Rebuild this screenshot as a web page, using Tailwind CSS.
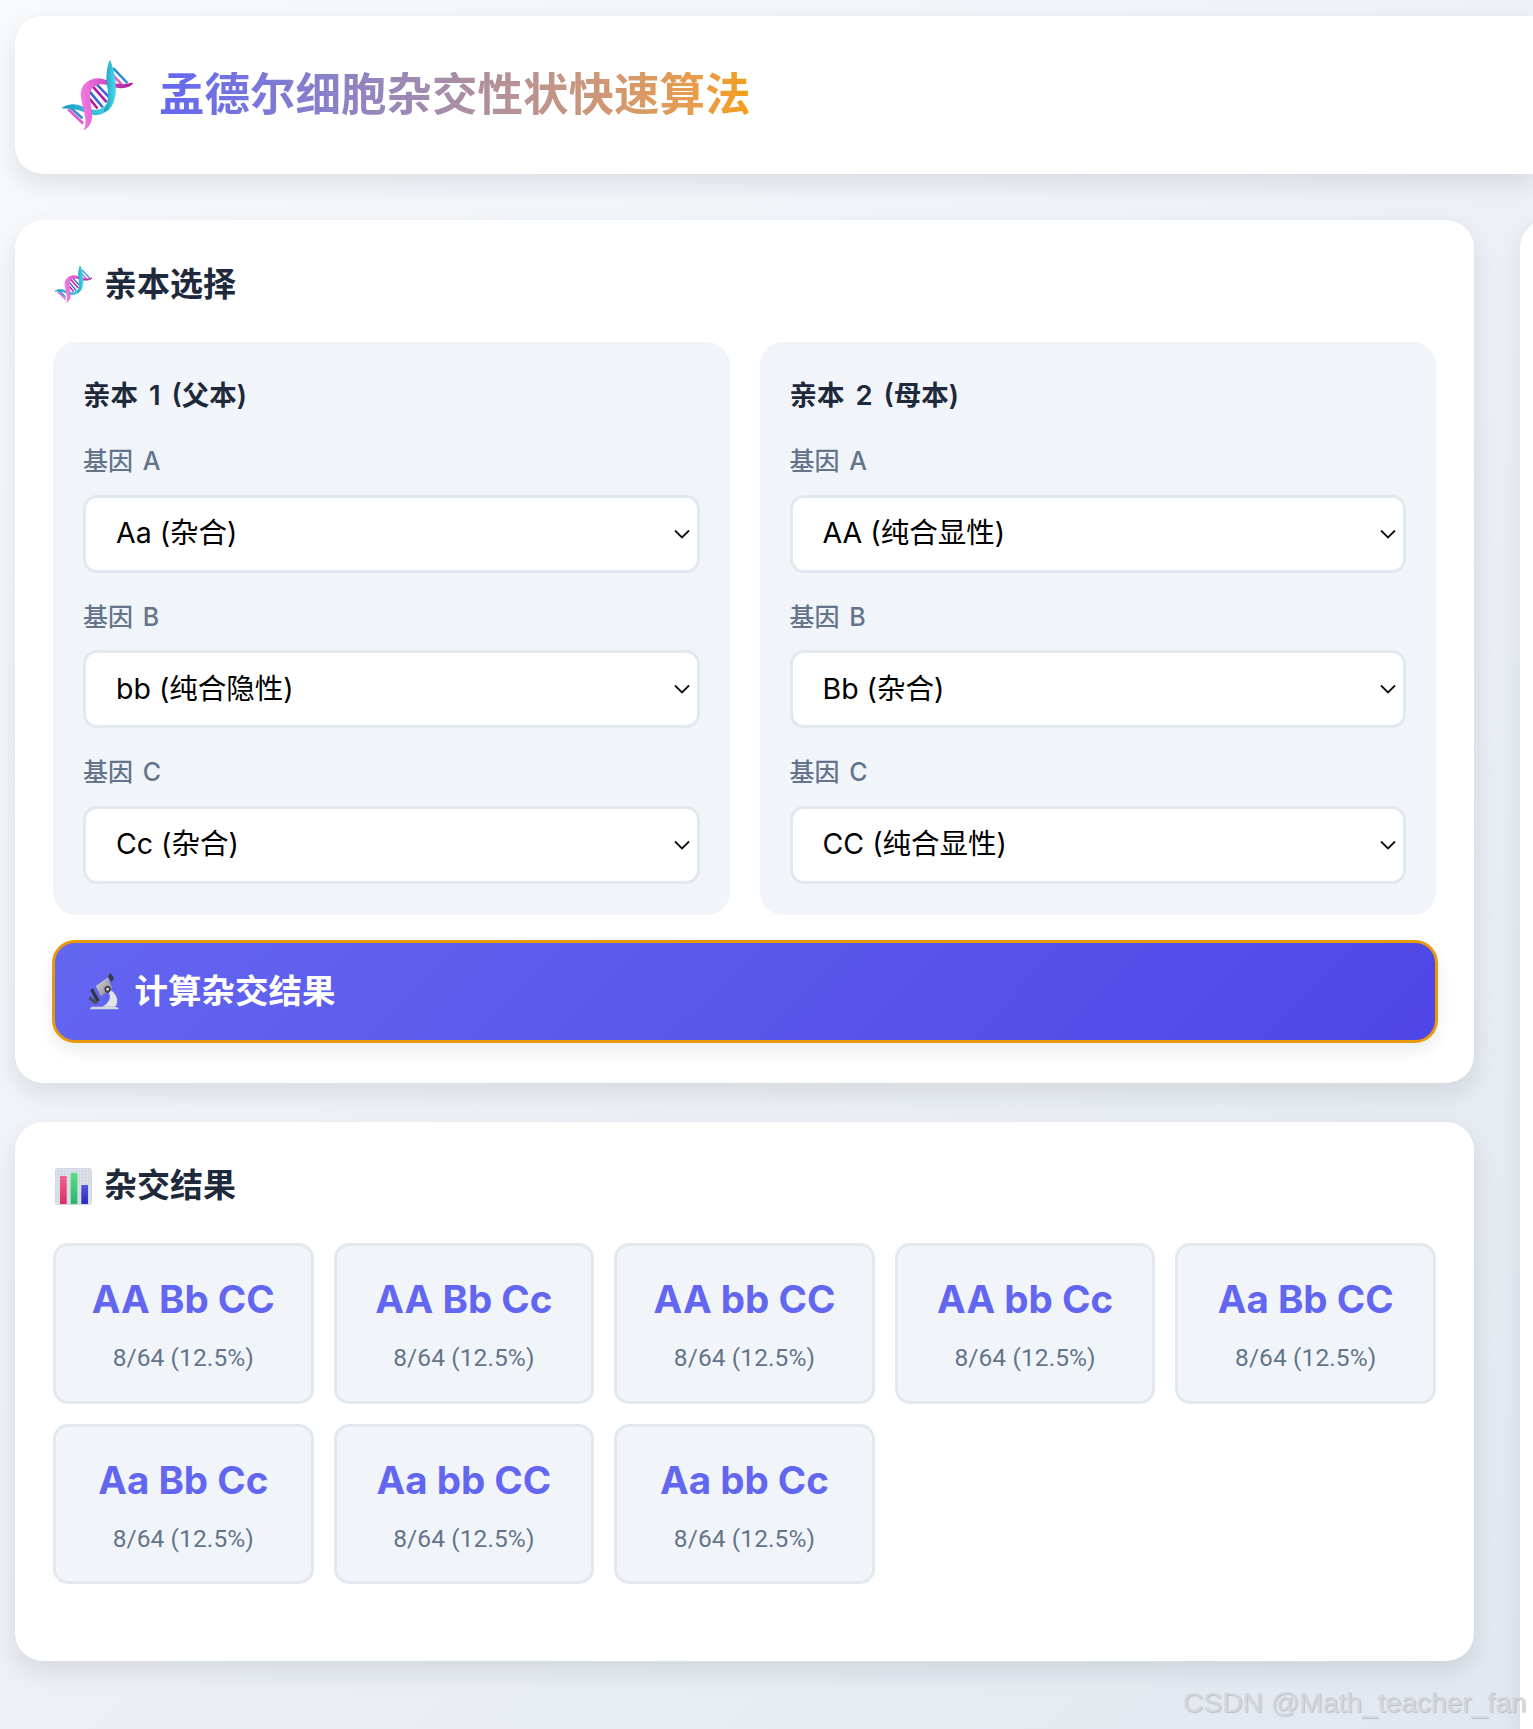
<!DOCTYPE html>
<html lang="zh-CN">
<head>
    <meta charset="UTF-8">
    <meta name="viewport" content="width=device-width, initial-scale=1.0">
    <title>孟德尔细胞杂交性状快速算法</title>
    <script src="https://cdn.jsdelivr.net/npm/@tailwindcss/browser@4"></script>
</head>
<body class="relative h-[1729px] overflow-hidden bg-[linear-gradient(135deg,#f8fafc,#e2e8f0)] pt-4 pl-[15px] font-['Inter','Noto_Sans_CJK_SC',sans-serif] text-[#1e293b]">

    <svg width="0" height="0" class="absolute">
        <defs>
            <linearGradient id="pink" x1="0" y1="0" x2="1" y2="0"><stop offset="0" stop-color="#f27be4"/><stop offset="1" stop-color="#b0159a"/></linearGradient>
            <linearGradient id="cyan" x1="0" y1="0" x2="1" y2="0"><stop offset="0" stop-color="#1b9cc2"/><stop offset="1" stop-color="#4bd8e8"/></linearGradient>
            <linearGradient id="tube" x1="0" y1="0" x2="1" y2="1"><stop offset="0" stop-color="#d4d6da"/><stop offset="1" stop-color="#83858b"/></linearGradient>
            <linearGradient id="barPink" x1="0" y1="0" x2="0" y2="1"><stop offset="0" stop-color="#f0628f"/><stop offset="1" stop-color="#d92d64"/></linearGradient>
            <linearGradient id="barGreen" x1="0" y1="0" x2="0" y2="1"><stop offset="0" stop-color="#55e07f"/><stop offset="1" stop-color="#2bb56e"/></linearGradient>
            <linearGradient id="barBlue" x1="0" y1="0" x2="0" y2="1"><stop offset="0" stop-color="#5257e0"/><stop offset="1" stop-color="#2a2bb8"/></linearGradient>
            <pattern id="chartGrid" width="3" height="3" patternUnits="userSpaceOnUse"><path d="M3 0H0V3" fill="none" stroke="#bcc3d2" stroke-width="0.5"/></pattern>
            <symbol id="dna" viewBox="62 52 224 220">
                <g fill="none" stroke-width="8">
                    <path d="M168 124 L210 168" stroke="#3f62d0"/><path d="M156 130 L202 182" stroke="#b5179e"/>
                    <path d="M150 150 L190 198" stroke="#3f62d0"/><path d="M150 172 L174 202" stroke="#b5179e"/>
                    <path d="M222 78 L266 124" stroke="#2f8fd0"/><path d="M220 98 L248 128" stroke="#e05ad0"/>
                    <path d="M92 200 L128 232" stroke="#2f8fd0"/><path d="M84 204 L130 248" stroke="#e05ad0"/>
                </g>
                <path d="M68 200 C85 188 108 188 125 197 C150 212 190 215 205 185 C218 155 195 100 212 57 C225 90 235 140 222 180 C208 222 165 228 135 212 C112 200 90 200 68 200Z" fill="url(#cyan)" stroke="url(#cyan)" stroke-width="4" stroke-linejoin="round"/>
                <path d="M135 265 C150 240 125 190 125 155 C128 120 165 105 195 115 C225 128 250 135 280 125 C265 140 235 140 210 130 C185 120 150 125 148 160 C148 200 170 240 135 265Z" fill="url(#pink)" stroke="url(#pink)" stroke-width="5" stroke-linejoin="round"/>
                <path d="M212 57 C225 90 235 140 222 180 C215 200 205 205 195 210 C205 190 215 170 205 130 C200 105 205 80 212 57Z" fill="url(#cyan)" stroke="url(#cyan)" stroke-width="4" stroke-linejoin="round"/>
            </symbol>
        </defs>
    </svg>

    <header class="flex h-[158px] w-[1518px] items-center rounded-l-[28px] bg-white pl-[46px] shadow-[0_10px_24px_rgba(15,23,42,0.1)]">
        <svg class="mr-[25px] h-[73px] w-[73px]"><use href="#dna"/></svg>
        <h1 class="bg-gradient-to-r from-[#6366f1] to-[#f59e0b] bg-clip-text text-[45.5px] leading-none font-bold text-transparent">孟德尔细胞杂交性状快速算法</h1>
    </header>

    <div class="mt-[46px] flex w-[1518px] gap-[46px]">
        <main class="flex w-[1459px] shrink-0 flex-col gap-[39px]">
            <section class="h-[863px] rounded-[28px] bg-white p-[38px] shadow-[0_10px_24px_rgba(15,23,42,0.1)]">
                <h2 class="mb-[31px] flex h-[53px] items-center gap-[11px] pl-[1px] text-[33px] font-bold">
                    <svg class="h-[39px] w-[39px]"><use href="#dna"/></svg>亲本选择
                </h2>
                <div class="grid grid-cols-2 gap-[30px]">
                    <div class="rounded-[23px] bg-[#f1f5f9] px-[30px] py-[31px]">
                        <h3 class="mb-[24px] text-[27.5px] leading-[44px] font-semibold [word-spacing:4px]">亲本 1 (父本)</h3>
                        <label class="mb-[13.5px] block text-[25px] leading-[40px] font-medium text-[#64748b] [word-spacing:3px]">基因 A</label>
                        <div class="relative mb-[24px]">
                            <select class="h-[78px] w-full appearance-none rounded-[14px] border-[3px] border-[#e2e8f0] bg-white px-[30px] text-[28.5px] text-black"><option>Aa (杂合)</option></select>
                            <svg class="absolute top-[34px] right-[10px] h-[10px] w-[16px]" viewBox="0 0 16 10" fill="none" stroke="#111" stroke-width="1.8"><path d="M1 1.5 L8 8.5 L15 1.5"/></svg>
                        </div>
                        <label class="mb-[13.5px] block text-[25px] leading-[40px] font-medium text-[#64748b] [word-spacing:3px]">基因 B</label>
                        <div class="relative mb-[24px]">
                            <select class="h-[78px] w-full appearance-none rounded-[14px] border-[3px] border-[#e2e8f0] bg-white px-[30px] text-[28.5px] text-black"><option>bb (纯合隐性)</option></select>
                            <svg class="absolute top-[34px] right-[10px] h-[10px] w-[16px]" viewBox="0 0 16 10" fill="none" stroke="#111" stroke-width="1.8"><path d="M1 1.5 L8 8.5 L15 1.5"/></svg>
                        </div>
                        <label class="mb-[13.5px] block text-[25px] leading-[40px] font-medium text-[#64748b] [word-spacing:3px]">基因 C</label>
                        <div class="relative">
                            <select class="h-[78px] w-full appearance-none rounded-[14px] border-[3px] border-[#e2e8f0] bg-white px-[30px] text-[28.5px] text-black"><option>Cc (杂合)</option></select>
                            <svg class="absolute top-[34px] right-[10px] h-[10px] w-[16px]" viewBox="0 0 16 10" fill="none" stroke="#111" stroke-width="1.8"><path d="M1 1.5 L8 8.5 L15 1.5"/></svg>
                        </div>
                    </div>
                    <div class="rounded-[23px] bg-[#f1f5f9] px-[30px] py-[31px]">
                        <h3 class="mb-[24px] text-[27.5px] leading-[44px] font-semibold [word-spacing:4px]">亲本 2 (母本)</h3>
                        <label class="mb-[13.5px] block text-[25px] leading-[40px] font-medium text-[#64748b] [word-spacing:3px]">基因 A</label>
                        <div class="relative mb-[24px]">
                            <select class="h-[78px] w-full appearance-none rounded-[14px] border-[3px] border-[#e2e8f0] bg-white px-[30px] text-[28.5px] text-black"><option>AA (纯合显性)</option></select>
                            <svg class="absolute top-[34px] right-[10px] h-[10px] w-[16px]" viewBox="0 0 16 10" fill="none" stroke="#111" stroke-width="1.8"><path d="M1 1.5 L8 8.5 L15 1.5"/></svg>
                        </div>
                        <label class="mb-[13.5px] block text-[25px] leading-[40px] font-medium text-[#64748b] [word-spacing:3px]">基因 B</label>
                        <div class="relative mb-[24px]">
                            <select class="h-[78px] w-full appearance-none rounded-[14px] border-[3px] border-[#e2e8f0] bg-white px-[30px] text-[28.5px] text-black"><option>Bb (杂合)</option></select>
                            <svg class="absolute top-[34px] right-[10px] h-[10px] w-[16px]" viewBox="0 0 16 10" fill="none" stroke="#111" stroke-width="1.8"><path d="M1 1.5 L8 8.5 L15 1.5"/></svg>
                        </div>
                        <label class="mb-[13.5px] block text-[25px] leading-[40px] font-medium text-[#64748b] [word-spacing:3px]">基因 C</label>
                        <div class="relative">
                            <select class="h-[78px] w-full appearance-none rounded-[14px] border-[3px] border-[#e2e8f0] bg-white px-[30px] text-[28.5px] text-black"><option>CC (纯合显性)</option></select>
                            <svg class="absolute top-[34px] right-[10px] h-[10px] w-[16px]" viewBox="0 0 16 10" fill="none" stroke="#111" stroke-width="1.8"><path d="M1 1.5 L8 8.5 L15 1.5"/></svg>
                        </div>
                    </div>
                </div>
                <button class="mt-[25px] -ml-[1.5px] flex h-[103.5px] w-[1386px] items-center gap-[15px] rounded-[23px] border-[3.5px] border-[#e69a0c] bg-[linear-gradient(135deg,#6366f1,#4f46e5)] bg-origin-border pl-[34px] text-[33.5px] font-semibold text-white shadow-[0_8px_16px_rgba(15,23,42,0.08)]">
                    <svg class="h-[37px] w-[31px]" viewBox="58 38 110 114" preserveAspectRatio="none">
                        <path d="M62 150 Q62 142 72 142 L150 142 Q163 142 163 150Z" fill="#d5d7dd"/>
                        <path d="M135 90 C160 105 165 130 150 142 L105 142 C125 135 140 115 128 100Z" fill="#e2e3e8"/>
                        <path d="M82 78 L125 52 L140 85 L100 110Z" fill="url(#tube)"/>
                        <path d="M125 48 L135 38 L147 55 L138 66Z" fill="#3a3c42"/>
                        <circle cx="124" cy="88" r="11" fill="#3a3c42"/><circle cx="124" cy="88" r="5" fill="#cfd2d8"/>
                        <path d="M62 90 L72 85 L96 122 L86 128Z" fill="#33363d"/>
                        <path d="M56 118 L62 110 L88 128 L82 136Z" fill="#4a4d55"/>
                    </svg>
                    计算杂交结果
                </button>
            </section>

            <section class="h-[539px] rounded-[28px] bg-white p-[38px] shadow-[0_10px_24px_rgba(15,23,42,0.1)]">
                <h2 class="mb-[31px] flex h-[52px] items-center gap-[12px] pl-[2px] text-[33px] font-bold">
                    <svg class="h-[37px] w-[37px]" viewBox="0 0 37 37">
                        <rect width="37" height="37" rx="3" fill="#dde1ea"/>
                        <rect width="37" height="37" rx="3" fill="url(#chartGrid)"/>
                        <rect x="5" y="8" width="6.7" height="28" fill="url(#barPink)"/>
                        <rect x="15.7" y="5" width="6.7" height="31" fill="url(#barGreen)"/>
                        <rect x="26.3" y="17" width="6.7" height="19" fill="url(#barBlue)"/>
                    </svg>杂交结果
                </h2>
                <div class="grid grid-cols-5 gap-[20px]">
                    <div class="flex h-[160.5px] flex-col items-center rounded-[15px] border-[3px] border-[#e2e8f0] bg-[#f1f5f9] pt-[31px]"><span class="text-[38.5px] leading-[44px] font-bold text-[#6366f1]">AA Bb CC</span><span class="mt-[22px] font-['Roboto','Noto_Sans_CJK_SC',sans-serif] text-[24.5px] leading-[30px] tracking-[0.1px] text-[#64748b]">8/64 (12.5%)</span></div>
                    <div class="flex h-[160.5px] flex-col items-center rounded-[15px] border-[3px] border-[#e2e8f0] bg-[#f1f5f9] pt-[31px]"><span class="text-[38.5px] leading-[44px] font-bold text-[#6366f1]">AA Bb Cc</span><span class="mt-[22px] font-['Roboto','Noto_Sans_CJK_SC',sans-serif] text-[24.5px] leading-[30px] tracking-[0.1px] text-[#64748b]">8/64 (12.5%)</span></div>
                    <div class="flex h-[160.5px] flex-col items-center rounded-[15px] border-[3px] border-[#e2e8f0] bg-[#f1f5f9] pt-[31px]"><span class="text-[38.5px] leading-[44px] font-bold text-[#6366f1]">AA bb CC</span><span class="mt-[22px] font-['Roboto','Noto_Sans_CJK_SC',sans-serif] text-[24.5px] leading-[30px] tracking-[0.1px] text-[#64748b]">8/64 (12.5%)</span></div>
                    <div class="flex h-[160.5px] flex-col items-center rounded-[15px] border-[3px] border-[#e2e8f0] bg-[#f1f5f9] pt-[31px]"><span class="text-[38.5px] leading-[44px] font-bold text-[#6366f1]">AA bb Cc</span><span class="mt-[22px] font-['Roboto','Noto_Sans_CJK_SC',sans-serif] text-[24.5px] leading-[30px] tracking-[0.1px] text-[#64748b]">8/64 (12.5%)</span></div>
                    <div class="flex h-[160.5px] flex-col items-center rounded-[15px] border-[3px] border-[#e2e8f0] bg-[#f1f5f9] pt-[31px]"><span class="text-[38.5px] leading-[44px] font-bold text-[#6366f1]">Aa Bb CC</span><span class="mt-[22px] font-['Roboto','Noto_Sans_CJK_SC',sans-serif] text-[24.5px] leading-[30px] tracking-[0.1px] text-[#64748b]">8/64 (12.5%)</span></div>
                    <div class="flex h-[160.5px] flex-col items-center rounded-[15px] border-[3px] border-[#e2e8f0] bg-[#f1f5f9] pt-[31px]"><span class="text-[38.5px] leading-[44px] font-bold text-[#6366f1]">Aa Bb Cc</span><span class="mt-[22px] font-['Roboto','Noto_Sans_CJK_SC',sans-serif] text-[24.5px] leading-[30px] tracking-[0.1px] text-[#64748b]">8/64 (12.5%)</span></div>
                    <div class="flex h-[160.5px] flex-col items-center rounded-[15px] border-[3px] border-[#e2e8f0] bg-[#f1f5f9] pt-[31px]"><span class="text-[38.5px] leading-[44px] font-bold text-[#6366f1]">Aa bb CC</span><span class="mt-[22px] font-['Roboto','Noto_Sans_CJK_SC',sans-serif] text-[24.5px] leading-[30px] tracking-[0.1px] text-[#64748b]">8/64 (12.5%)</span></div>
                    <div class="flex h-[160.5px] flex-col items-center rounded-[15px] border-[3px] border-[#e2e8f0] bg-[#f1f5f9] pt-[31px]"><span class="text-[38.5px] leading-[44px] font-bold text-[#6366f1]">Aa bb Cc</span><span class="mt-[22px] font-['Roboto','Noto_Sans_CJK_SC',sans-serif] text-[24.5px] leading-[30px] tracking-[0.1px] text-[#64748b]">8/64 (12.5%)</span></div>
                </div>
            </section>
        </main>

        <!-- second column, only its left edge is on screen -->
        <aside class="-ml-[30px] h-[1509px] w-[43px] shrink-0 overflow-hidden pl-[30px]">
            <div class="h-full w-[100px] rounded-tl-[28px] bg-white shadow-[0_10px_24px_rgba(15,23,42,0.08)]"></div>
        </aside>
    </div>

    <div class="absolute top-[1688px] left-[1183px] font-['Liberation_Sans',sans-serif] text-[28.2px] leading-none whitespace-nowrap text-[#d3d6dc] [text-shadow:1px_1px_1px_rgba(110,115,125,0.35)]">CSDN @Math_teacher_fan</div>
</body>
</html>
